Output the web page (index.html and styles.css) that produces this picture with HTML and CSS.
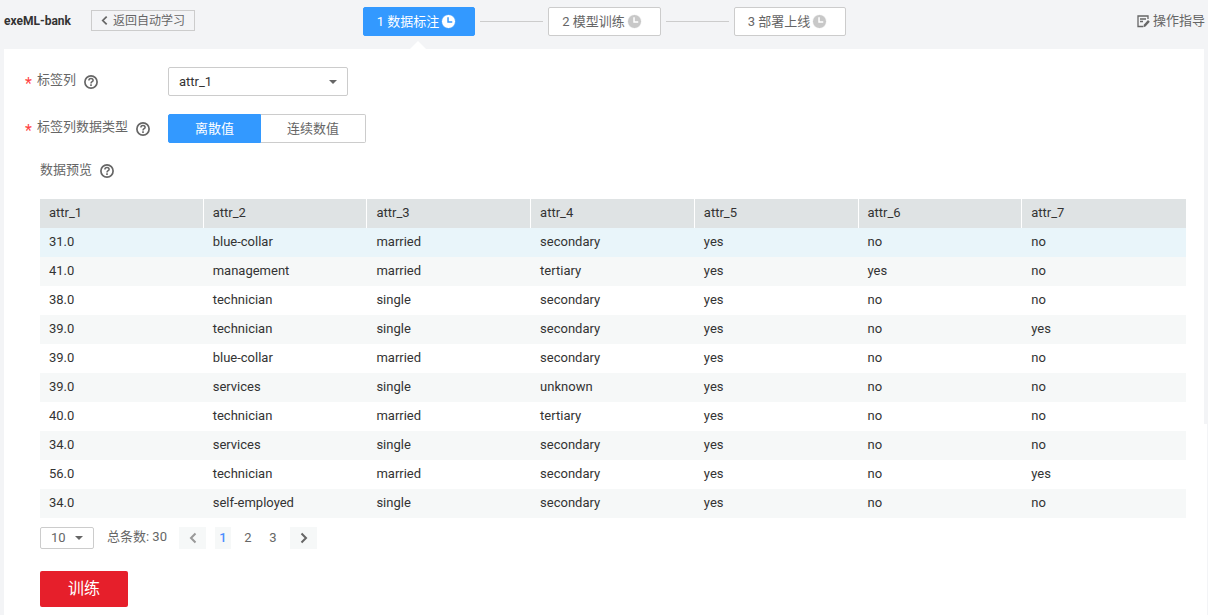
FILE: index.html
```
<!DOCTYPE html>
<html lang="zh-CN">
<head>
<meta charset="utf-8">
<title>exeML-bank</title>
<link rel="stylesheet" href="styles.css">
</head>
<body>
<svg width="0" height="0" class="defs" aria-hidden="true">
  <symbol id="clock" viewBox="0 0 16 16"><circle cx="8" cy="8" r="7.5" fill="currentColor"/><path class="hands" d="M7.500 3.500V8.500H12" fill="none" stroke-width="1.600"/></symbol>
  <symbol id="help" viewBox="0 0 14 14"><circle cx="7" cy="7" r="6.100" fill="none" stroke="currentColor" stroke-width="1.700"/><path d="M4.900 5.600C4.900 4.300 5.800 3.600 7 3.600s2.100.7 2.100 1.800C9.100 6.700 7 6.700 7 8.400" fill="none" stroke="currentColor" stroke-width="1.500"/><path d="M6.200 9.300h1.600v1.600h-1.600z" fill="currentColor"/></symbol>
  <symbol id="left" viewBox="0 0 8 12"><path d="M6.500 1.500L2 6l4.500 4.500" fill="none" stroke="currentColor" stroke-width="2"/></symbol>
  <symbol id="right" viewBox="0 0 8 12"><path d="M1.500 1.500L6 6l-4.500 4.500" fill="none" stroke="currentColor" stroke-width="2"/></symbol>
</svg>
<header class="topbar">
  <div class="heading">
    <h1 class="title">exeML-bank</h1>
    <button type="button" class="back"><svg class="chevron-small"><use href="#left"/></svg>返回自动学习</button>
  </div>
  <nav class="steps">
    <button type="button" class="step active">1 数据标注<svg class="clock"><use href="#clock"/></svg></button>
    <span class="line"></span>
    <button type="button" class="step">2 模型训练<svg class="clock"><use href="#clock"/></svg></button>
    <span class="line"></span>
    <button type="button" class="step">3 部署上线<svg class="clock"><use href="#clock"/></svg></button>
  </nav>
  <a class="guide" href="#"><svg class="guide-icon" viewBox="0 0 13 13"><path d="M11 4V1H1v10.500h5M3 4h6M3 6.500h3" fill="none" stroke="currentColor" stroke-width="1.300"/><path d="M11 5l1.800 1.800-4.300 4.700-2.200.7.500-2.400z" fill="currentColor"/></svg>操作指导</a>
</header>
<main class="panel">
  <div class="field">
    <div class="label"><span class="star">*</span><label class="caption" for="column">标签列</label><svg class="help"><use href="#help"/></svg></div>
    <div class="select wide"><select id="column"><option>attr_1</option><option>attr_2</option></select></div>
  </div>
  <div class="field">
    <div class="label"><span class="star">*</span><span class="caption" id="type">标签列数据类型</span><svg class="help"><use href="#help"/></svg></div>
    <div class="toggle" role="group" aria-labelledby="type"><button type="button" class="discrete" aria-pressed="true">离散值</button><button type="button" class="continuous" aria-pressed="false">连续数值</button></div>
  </div>
  <section class="preview">
    <h2 class="preview-title"><span class="caption">数据预览</span><svg class="help"><use href="#help"/></svg></h2>
    <table class="data">
      <thead><tr><th>attr_1</th><th>attr_2</th><th>attr_3</th><th>attr_4</th><th>attr_5</th><th>attr_6</th><th>attr_7</th></tr></thead>
      <tbody>
        <tr class="hover"><td>31.0</td><td>blue-collar</td><td>married</td><td>secondary</td><td>yes</td><td>no</td><td>no</td></tr>
        <tr><td>41.0</td><td>management</td><td>married</td><td>tertiary</td><td>yes</td><td>yes</td><td>no</td></tr>
        <tr><td>38.0</td><td>technician</td><td>single</td><td>secondary</td><td>yes</td><td>no</td><td>no</td></tr>
        <tr><td>39.0</td><td>technician</td><td>single</td><td>secondary</td><td>yes</td><td>no</td><td>yes</td></tr>
        <tr><td>39.0</td><td>blue-collar</td><td>married</td><td>secondary</td><td>yes</td><td>no</td><td>no</td></tr>
        <tr><td>39.0</td><td>services</td><td>single</td><td>unknown</td><td>yes</td><td>no</td><td>no</td></tr>
        <tr><td>40.0</td><td>technician</td><td>married</td><td>tertiary</td><td>yes</td><td>no</td><td>no</td></tr>
        <tr><td>34.0</td><td>services</td><td>single</td><td>secondary</td><td>yes</td><td>no</td><td>no</td></tr>
        <tr><td>56.0</td><td>technician</td><td>married</td><td>secondary</td><td>yes</td><td>no</td><td>yes</td></tr>
        <tr><td>34.0</td><td>self-employed</td><td>single</td><td>secondary</td><td>yes</td><td>no</td><td>no</td></tr>
      </tbody>
    </table>
    <div class="pager">
      <div class="select small"><select aria-label="每页条数"><option>10</option><option>20</option></select></div>
      <span class="total">总条数: 30</span>
      <div class="pages">
        <button type="button" class="arrow" disabled aria-label="上一页"><svg class="chevron"><use href="#left"/></svg></button>
        <button type="button" class="page current">1</button>
        <button type="button" class="page">2</button>
        <button type="button" class="page">3</button>
        <button type="button" class="arrow" aria-label="下一页"><svg class="chevron"><use href="#right"/></svg></button>
      </div>
    </div>
    <button type="button" class="train">训练</button>
  </section>
</main>
</body>
</html>
```
FILE: styles.css
```
* { box-sizing: border-box; }
body {
  margin: 0;
  min-height: 100vh;
  display: flex;
  flex-direction: column;
  background: #f3f4f6;
  color: #333;
  font: 13px/20px Roboto, "Noto Sans CJK SC", sans-serif;
}
button, select { font: inherit; color: inherit; border-radius: 0; margin: 0; }
button { padding: 0; cursor: pointer; }
.defs { position: absolute; }

.topbar {
  display: grid;
  grid-template-columns: 1fr auto 1fr;
  align-items: start;
  padding: 7px 3px 0 4px;
  height: 49px;
  color: #666;
}
.heading { display: flex; align-items: center; gap: 20px; padding-top: 3px; }
.title { margin: 0; font-size: 12px; font-weight: 700; color: #333; }
.back {
  display: flex;
  align-items: center;
  gap: 5px;
  height: 21px;
  padding: 0 9px;
  border: 1px solid #ccc;
  background: transparent;
  font-size: 12px;
}
.chevron-small { width: 7px; height: 11px; }
.steps { display: flex; align-items: center; }
.step {
  position: relative;
  display: flex;
  align-items: center;
  gap: 2px;
  height: 29px;
  padding: 0 18px 0 13px;
  border: 1px solid #ccc;
  border-radius: 2px;
  background: #fff;
}
.clock { width: 15px; height: 15px; color: #c8c8c8; stroke: #fff; }
.step.active { background: #39f; border-color: #39f; color: #fff; }
.step.active .clock { color: #fff; stroke: #39f; }
.clock circle { stroke: none; }
.step.active::after {
  content: "";
  position: absolute;
  left: 46px;
  top: 33px;
  border: 8px solid transparent;
  border-top: 0;
  border-bottom-color: #fff;
}
.line { width: 63px; margin: 0 5px; border-top: 1px solid #ccc; }
.guide {
  justify-self: end;
  display: flex;
  align-items: center;
  gap: 3px;
  padding-top: 4px;
  color: #666;
  text-decoration: none;
}
.guide-icon { width: 13px; height: 13px; }

.panel {
  position: relative;
  flex: 1;
  margin: 0 1px 0 4px;
  padding: 18px 21px 8px;
  background: #fff;
}
/* thin scroll marker along the right edge */
.panel::after {
  content: "";
  position: absolute;
  top: 0;
  right: 0;
  width: 3px;
  height: 375px;
  background: #f3f4f6;
}
.field { display: flex; align-items: center; margin-bottom: 18px; }
.label { display: flex; align-items: center; width: 143px; color: #666; }
.star { width: 12px; color: #f44; font-size: 16px; padding-top: 5px; }
.caption { padding-bottom: 3px; }
.help { width: 14px; height: 14px; margin-left: 8px; color: #666; flex: none; }
.select { position: relative; }
.select select {
  appearance: none;
  width: 100%;
  height: 100%;
  padding: 0 10px;
  border: 1px solid #ccc;
  border-radius: 2px;
  background: #fff;
}
.select::after {
  content: "";
  position: absolute;
  right: 11px;
  top: 50%;
  margin-top: -2px;
  border: 4px solid transparent;
  border-bottom: 0;
  border-top-color: #666;
  pointer-events: none;
}
.wide { width: 180px; height: 29px; }
.small { width: 54px; height: 22px; color: #666; }
.toggle { display: flex; height: 29px; }
.discrete { width: 93px; border: 1px solid #39f; border-radius: 2px 0 0 2px; background: #39f; color: #fff; }
.continuous { width: 105px; border: 1px solid #ccc; border-left: 0; border-radius: 0 2px 2px 0; background: #fff; color: #666; }

.preview { padding-left: 15px; }
.preview-title { display: flex; align-items: center; height: 20px; margin: 0 0 18px; font-size: 13px; font-weight: 400; color: #666; }
.data { width: 100%; table-layout: fixed; border-collapse: separate; border-spacing: 0; }
.data th, .data td { height: 29px; padding: 0 9px 2px; text-align: left; font-weight: 400; line-height: 20px; }
.data th { background: #dfe3e4; border-right: 1px solid #fff; }
.data th:last-child { border-right: 0; }
.data tbody tr:nth-child(even) { background: #f6f8f8; }
.data tbody tr.hover { background: #e9f5fa; }

.pager { display: flex; align-items: center; margin: 9px 0 22px; color: #666; }
.total { margin: 0 12px 0 13px; padding-bottom: 2px; }
.pages { display: flex; gap: 9px; }
.arrow { width: 27px; height: 22px; display: flex; align-items: center; justify-content: center; border: 0; background: #f6f8f8; color: #666; }
.arrow:disabled { color: #999; }
.chevron { width: 8px; height: 12px; }
.page { width: 16px; height: 22px; border: 0; background: transparent; }
.page.current { background: #f6f8f8; color: #4b8dff; font-weight: 500; }
.train { width: 88px; height: 36px; border: 0; border-radius: 2px; background: #e61f2b; color: #fff; font-size: 16px; }
```
